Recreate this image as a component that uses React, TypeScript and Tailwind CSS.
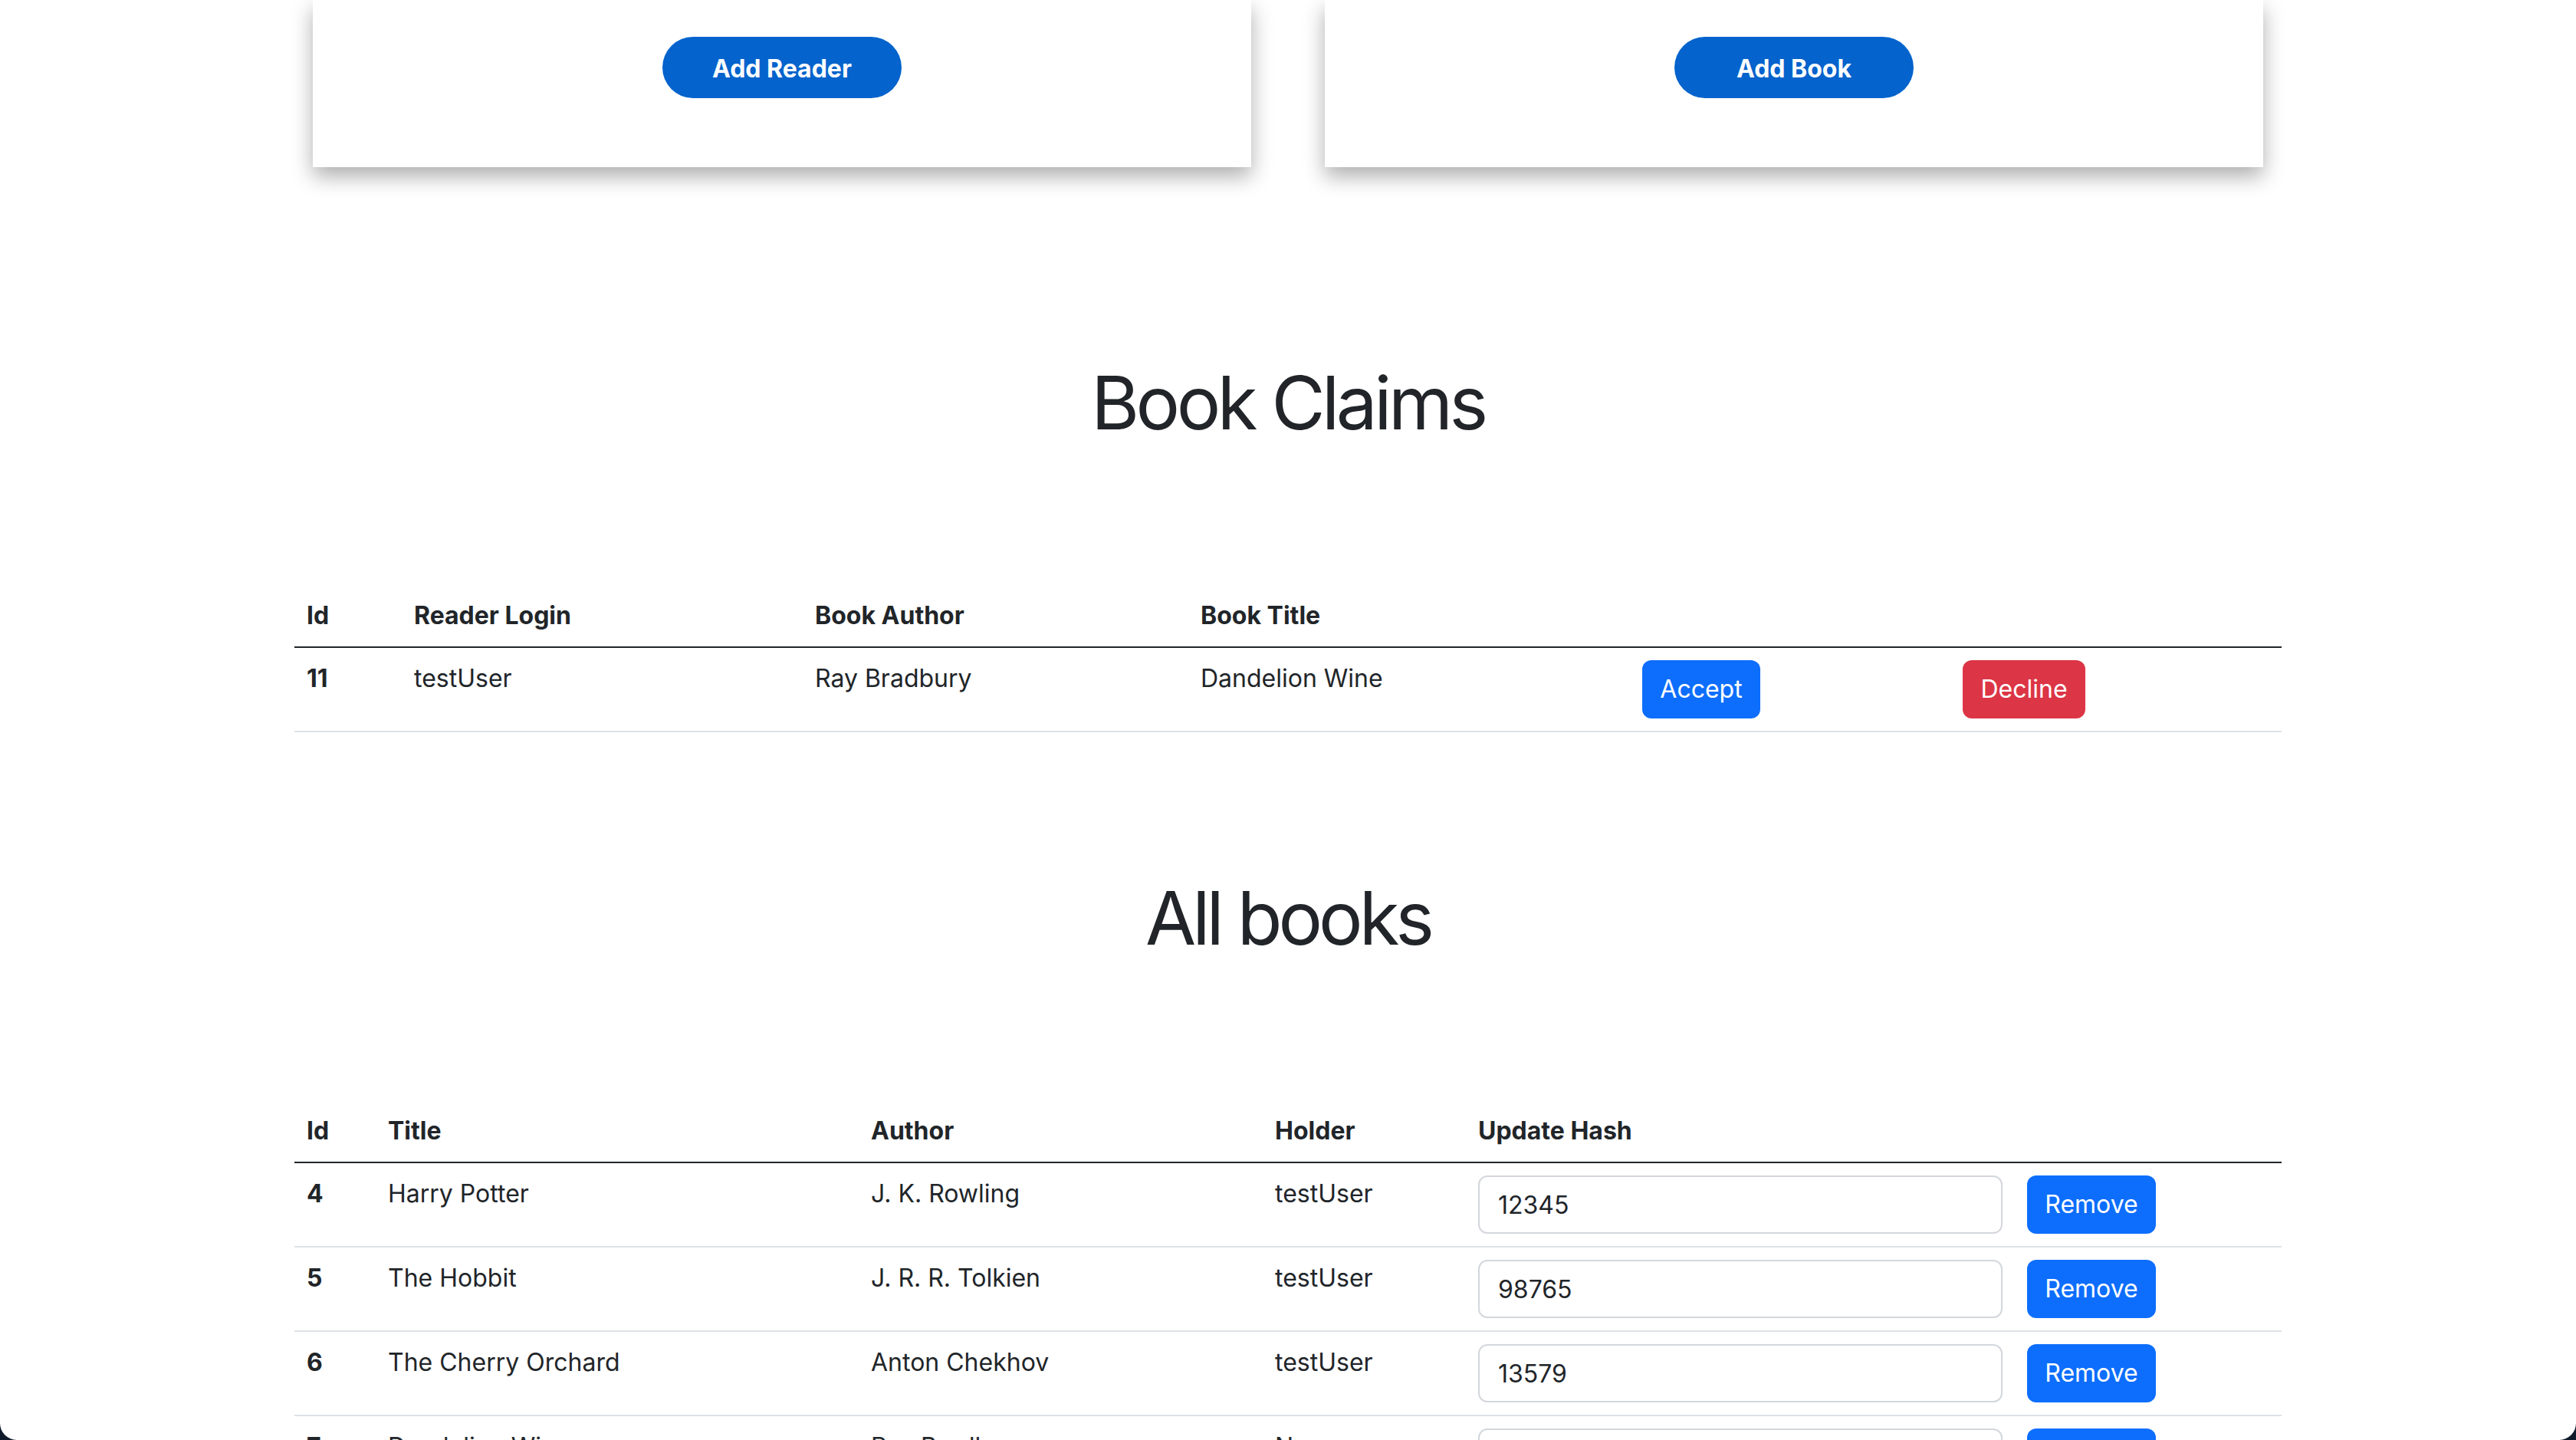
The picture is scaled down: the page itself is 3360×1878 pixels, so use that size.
import React from "react";

const claims = [
  { id: 11, login: "testUser", author: "Ray Bradbury", title: "Dandelion Wine" },
];

const books = [
  { id: 4, title: "Harry Potter", author: "J. K. Rowling", holder: "testUser", hash: "12345" },
  { id: 5, title: "The Hobbit", author: "J. R. R. Tolkien", holder: "testUser", hash: "98765" },
  { id: 6, title: "The Cherry Orchard", author: "Anton Chekhov", holder: "testUser", hash: "13579" },
  { id: 7, title: "Dandelion Wine", author: "Ray Bradbury", holder: "None", hash: "" },
];

const th = "px-[16px] py-[16px] text-left align-top font-bold text-[32px] leading-[48px]";
const td = "px-[16px] py-[16px] text-left align-top text-[32px] leading-[48px]";
const btn = "h-[76px] rounded-[12px] text-white text-[32px] leading-[48px] text-center";

export default function App() {
  return (
    <div className="w-full h-[1878px] bg-[#0f1b2b] font-['Inter',sans-serif] text-[#212529]">
      <div className="w-full h-full bg-white rounded-b-[22px] overflow-hidden">

        {/* Add forms (cut off at top) */}
        <div className="flex justify-center gap-[96px]">
          <div className="w-[1224px] h-[218px] bg-white shadow-[0_12px_26px_rgba(0,0,0,0.32)] flex justify-center pt-[48px]">
            <button className="w-[312px] h-[80px] pt-[3px] rounded-full bg-[#0463cc] text-white font-bold text-[32px]">
              Add Reader
            </button>
          </div>
          <div className="w-[1224px] h-[218px] bg-white shadow-[0_12px_26px_rgba(0,0,0,0.32)] flex justify-center pt-[48px]">
            <button className="w-[312px] h-[80px] pt-[3px] rounded-full bg-[#0463cc] text-white font-bold text-[32px]">
              Add Book
            </button>
          </div>
        </div>

        <div className="w-[2592px] mx-auto">
          {/* Book Claims */}
          <h1 className="mt-[250px] text-center text-[96px] leading-[1.2] font-normal tracking-[-4.5px]">Book Claims</h1>

          <table className="mt-[180px] w-full table-fixed border-collapse">
            <colgroup>
              <col className="w-[140px]" />
              <col className="w-[523px]" />
              <col className="w-[503px]" />
              <col className="w-[576px]" />
              <col className="w-[418px]" />
              <col className="w-[432px]" />
            </colgroup>
            <thead>
              <tr className="border-b-2 border-[#212529]">
                <th className={th}>Id</th>
                <th className={th}>Reader Login</th>
                <th className={th}>Book Author</th>
                <th className={th}>Book Title</th>
                <th className={th}></th>
                <th className={th}></th>
              </tr>
            </thead>
            <tbody>
              {claims.map((c) => (
                <tr key={c.id} className="border-b-2 border-[#dee2e6]">
                  <td className={`${td} font-bold`}>{c.id}</td>
                  <td className={td}>{c.login}</td>
                  <td className={td}>{c.author}</td>
                  <td className={td}>{c.title}</td>
                  <td className={td}>
                    <button className={`${btn} w-[154px] bg-[#0d6efd]`}>Accept</button>
                  </td>
                  <td className={td}>
                    <button className={`${btn} w-[160px] bg-[#dc3545]`}>Decline</button>
                  </td>
                </tr>
              ))}
            </tbody>
          </table>

          {/* All books */}
          <h1 className="mt-[185px] text-center text-[96px] leading-[1.2] font-normal tracking-[-5px]">All books</h1>

          <table className="mt-[180px] w-full table-fixed border-collapse">
            <colgroup>
              <col className="w-[106px]" />
              <col className="w-[630px]" />
              <col className="w-[527px]" />
              <col className="w-[265px]" />
              <col className="w-[716px]" />
              <col className="w-[348px]" />
            </colgroup>
            <thead>
              <tr className="border-b-2 border-[#212529]">
                <th className={th}>Id</th>
                <th className={th}>Title</th>
                <th className={th}>Author</th>
                <th className={th}>Holder</th>
                <th className={th}>Update Hash</th>
                <th className={th}></th>
              </tr>
            </thead>
            <tbody>
              {books.map((b) => (
                <tr key={b.id} className="border-b-2 border-[#dee2e6]">
                  <td className={`${td} font-bold`}>{b.id}</td>
                  <td className={td}>{b.title}</td>
                  <td className={td}>{b.author}</td>
                  <td className={td}>{b.holder}</td>
                  <td className={td}>
                    <input
                      defaultValue={b.hash}
                      className="block w-full h-[76px] border-2 border-[#d3d7dc] rounded-[12px] px-[24px] text-[32px] text-[#212529] bg-white outline-none"
                    />
                  </td>
                  <td className={td}>
                    <button className={`${btn} w-[168px] bg-[#0d6efd]`}>Remove</button>
                  </td>
                </tr>
              ))}
            </tbody>
          </table>
        </div>
      </div>
    </div>
  );
}
